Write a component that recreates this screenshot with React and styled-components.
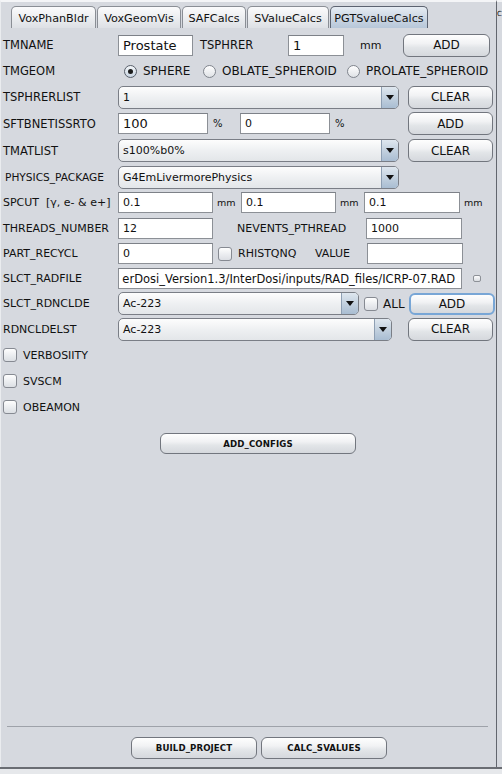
import React from "react";
import styled, { createGlobalStyle, css } from "styled-components";

const GlobalStyle = createGlobalStyle`
  html, body {
    margin: 0;
    padding: 0;
    background: #e4e6ea;
  }
  body {
    font-family: "DejaVu Sans", "Liberation Sans", sans-serif;
    color: #111;
  }
`;

const Screen = styled.div`
  width: 502px;
  height: 774px;
  display: flex;
  flex-direction: column;
  overflow: hidden;
  background: #e4e6ea;
`;

const Main = styled.div`
  display: flex;
  height: 767px;
  flex-shrink: 0;
`;

const Panel = styled.div`
  width: 497px;
  flex-shrink: 0;
  box-sizing: border-box;
  border-top: 2px solid #f4f5f7;
  border-left: 1px solid #eaecef;
  border-right: 1px solid #62666e;
  background: #d6d9df;
  display: flex;
  flex-direction: column;
`;

const SideStrip = styled.div`
  flex: 1;
  overflow: hidden;
  background: #d6d9df;
  border-top: 2px solid #f4f5f7;
  padding: 8px 0 0 0;
  font-size: 7px;
  white-space: nowrap;
`;

const BottomBar = styled.div`
  flex: 1;
  border-top: 2px solid #6a6d73;
  background: #e6e8eb;
`;

const TabBar = styled.div`
  display: flex;
  align-items: flex-end;
  gap: 1px;
  height: 26px;
  padding-left: 10px;
`;

const Tab = styled.div`
  box-sizing: border-box;
  width: ${(p) => p.$w}px;
  height: 22px;
  border: 1px solid #8a8e95;
  border-bottom: none;
  border-radius: 5px 5px 0 0;
  background: linear-gradient(#fbfbfc, #e9ebee 60%, #dde0e5);
  display: flex;
  align-items: center;
  justify-content: center;
  font-size: 11.2px;
  padding-top: 1px;
  ${(p) =>
    p.$active &&
    css`
      border-color: #5c6370;
      background: linear-gradient(#e6ecf3, #cdd8e4 50%, #b7c7d9);
    `}
`;

const Form = styled.div`
  display: flex;
  flex-direction: column;
  padding: 4px 0 0 2px;
`;

const Row = styled.div`
  display: flex;
  align-items: center;
  height: ${(p) => p.$h || 26}px;
`;

const Label = styled.span`
  flex-shrink: 0;
  box-sizing: border-box;
  width: ${(p) => (p.$w ? `${p.$w}px` : "auto")};
  padding-left: ${(p) => p.$pl || 0}px;
  font-size: ${(p) => p.$fs || 11.5}px;
  white-space: pre;
`;

const Field = styled.div`
  flex-shrink: 0;
  box-sizing: border-box;
  width: ${(p) => p.$w}px;
  height: 21px;
  background: #fff;
  border: 1px solid #8c9096;
  border-top-color: #7d8188;
  display: flex;
  align-items: center;
  padding: 0 4px;
  font-size: ${(p) => p.$fs || 11}px;
  white-space: nowrap;
  overflow: hidden;
  ${(p) =>
    p.$end &&
    css`
      justify-content: flex-end;
      padding-right: 6px;
    `}
`;

const Combo = styled.div`
  flex-shrink: 0;
  box-sizing: border-box;
  width: ${(p) => p.$w}px;
  height: 23px;
  display: flex;
  border: 1px solid #7a7e86;
  border-radius: 5px;
  overflow: hidden;
  background: linear-gradient(#fdfdfd, #eef0f2 50%, #e3e6e9);
`;

const ComboText = styled.span`
  flex: 1;
  display: flex;
  align-items: center;
  padding-left: 4px;
  font-size: 11px;
`;

const ComboArrow = styled.span`
  width: 16px;
  border-left: 1px solid #8e9fb3;
  background: linear-gradient(#dfe7ef, #c3d1df 50%, #a9bdd2);
  display: flex;
  align-items: center;
  justify-content: center;
`;

const Button = styled.button`
  flex-shrink: 0;
  box-sizing: border-box;
  width: ${(p) => p.$w}px;
  height: ${(p) => p.$h || 23}px;
  margin-left: ${(p) => p.$ml || 0}px;
  padding: 0;
  border: 1px solid #72767e;
  border-radius: 6px;
  background: linear-gradient(#fefefe, #f1f2f4 40%, #e2e5e8 60%, #d5d8dd);
  font-family: inherit;
  font-size: 12px;
  color: #111;
  ${(p) =>
    p.$focus &&
    css`
      border: 2px solid #78a6d6;
    `}
`;

const SmallButton = styled(Button)`
  font-size: 8.6px;
  font-weight: bold;
  letter-spacing: 0.1px;
`;

const Check = styled.span`
  flex-shrink: 0;
  box-sizing: border-box;
  width: 14px;
  height: 14px;
  margin-left: ${(p) => p.$ml || 0}px;
  border: 1px solid #868a92;
  border-radius: 3px;
  background: linear-gradient(#fefefe, #eceef1 50%, #dcdfe4);
`;

const TinyKnob = styled.span`
  flex-shrink: 0;
  box-sizing: border-box;
  width: 8px;
  height: 7px;
  margin-left: 11px;
  border: 1px solid #8d9197;
  border-radius: 2px;
  background: linear-gradient(#fdfdfd, #dadde2);
`;

const RadioGroup = styled.div`
  display: flex;
  align-items: center;
  padding-left: 6px;
`;

const RadioItem = styled.label`
  display: flex;
  align-items: center;
  gap: 6px;
  width: ${(p) => (p.$w ? `${p.$w}px` : "auto")};
  font-size: 12px;
  white-space: nowrap;
`;

const RadioDot = styled.span`
  box-sizing: border-box;
  width: 13px;
  height: 13px;
  border-radius: 50%;
  border: 1px solid #80858d;
  background: linear-gradient(#fefefe, #dfe2e6);
  display: flex;
  align-items: center;
  justify-content: center;
  ${(p) =>
    p.$on &&
    css`
      border-color: #59606b;
      background: linear-gradient(#f3f6f9, #c9d5e2);
      &::after {
        content: "";
        width: 5px;
        height: 5px;
        border-radius: 50%;
        background: #1c1c1c;
      }
    `}
`;

const ConfigRow = styled.div`
  display: flex;
  padding-left: 159px;
  margin-top: 13px;
`;

const Filler = styled.div`
  flex: 1;
`;

const Separator = styled.div`
  height: 1px;
  margin: 0 8px 0 6px;
  background: #9ea2a9;
`;

const Footer = styled.div`
  display: flex;
  gap: 4px;
  padding: 10px 0 8px 130px;
`;

const Arrow = () => (
  <svg width="8" height="5" viewBox="0 0 8 5">
    <polygon points="0,0 8,0 4,5" fill="#111" />
  </svg>
);

const Select = ({ w, value }) => (
  <Combo $w={w}>
    <ComboText>{value}</ComboText>
    <ComboArrow>
      <Arrow />
    </ComboArrow>
  </Combo>
);

const tabs = [
  { name: "VoxPhanBldr", w: 85 },
  { name: "VoxGeomVis", w: 84 },
  { name: "SAFCalcs", w: 64 },
  { name: "SValueCalcs", w: 82 },
  { name: "PGTSvalueCalcs", w: 98, active: true },
];

export default function App() {
  return (
    <>
      <GlobalStyle />
      <Screen>
        <Main>
          <Panel>
            <TabBar>
              {tabs.map((t) => (
                <Tab key={t.name} $w={t.w} $active={t.active}>
                  {t.name}
                </Tab>
              ))}
            </TabBar>

            <Form>
              <Row>
                <Label $w={115}>TMNAME</Label>
                <Field $w={75} $fs={13}>Prostate</Field>
                <Label $w={95} $pl={7}>TSPHRER</Label>
                <Field $w={56} $fs={13}>1</Field>
                <Label $w={59} $pl={16} $fs={11}>mm</Label>
                <Button $w={87}>ADD</Button>
              </Row>

              <Row>
                <Label $w={115}>TMGEOM</Label>
                <RadioGroup>
                  <RadioItem $w={79}>
                    <RadioDot $on />
                    SPHERE
                  </RadioItem>
                  <RadioItem $w={144}>
                    <RadioDot />
                    OBLATE_SPHEROID
                  </RadioItem>
                  <RadioItem>
                    <RadioDot />
                    PROLATE_SPHEROID
                  </RadioItem>
                </RadioGroup>
              </Row>

              <Row>
                <Label $w={115}>TSPHRERLIST</Label>
                <Select w={281} value="1" />
                <Button $w={85} $ml={9}>CLEAR</Button>
              </Row>

              <Row $h={27}>
                <Label $w={115}>SFTBNETISSRTO</Label>
                <Field $w={90} $fs={13}>100</Field>
                <Label $w={32} $pl={5} $fs={10}>%</Label>
                <Field $w={90}>0</Field>
                <Label $w={78} $pl={5} $fs={10}>%</Label>
                <Button $w={85}>ADD</Button>
              </Row>

              <Row $h={27}>
                <Label $w={115}>TMATLIST</Label>
                <Select w={281} value="s100%b0%" />
                <Button $w={85} $ml={9}>CLEAR</Button>
              </Row>

              <Row>
                <Label $w={115} $pl={2} $fs={10.6}>PHYSICS_PACKAGE</Label>
                <Select w={281} value="G4EmLivermorePhysics" />
              </Row>

              <Row $h={25}>
                <Label $w={115} $fs={11}>SPCUT  [γ, e- &amp; e+]</Label>
                <Field $w={95}>0.1</Field>
                <Label $w={28} $pl={4} $fs={9.5}>mm</Label>
                <Field $w={95}>0.1</Field>
                <Label $w={28} $pl={4} $fs={9.5}>mm</Label>
                <Field $w={96}>0.1</Field>
                <Label $pl={4} $fs={9.5}>mm</Label>
              </Row>

              <Row>
                <Label $w={115} $fs={11}>THREADS_NUMBER</Label>
                <Field $w={95}>12</Field>
                <Label $w={153} $pl={24} $fs={11}>NEVENTS_PTHREAD</Label>
                <Field $w={96}>1000</Field>
              </Row>

              <Row $h={25}>
                <Label $w={115} $fs={11}>PART_RECYCL</Label>
                <Field $w={95}>0</Field>
                <Check $ml={5} />
                <Label $w={77} $pl={6} $fs={11}>RHISTQNQ</Label>
                <Label $w={58} $pl={6} $fs={11}>VALUE</Label>
                <Field $w={96} />
              </Row>

              <Row $h={25}>
                <Label $w={115} $fs={11}>SLCT_RADFILE</Label>
                <Field $w={344} $fs={11.5} $end>
                  erDosi_Version1.3/InterDosi/inputs/RAD_files/ICRP-07.RAD
                </Field>
                <TinyKnob />
              </Row>

              <Row $h={25}>
                <Label $w={115} $fs={11}>SLCT_RDNCLDE</Label>
                <Select w={241} value="Ac-223" />
                <Check $ml={5} />
                <Label $w={31} $pl={5} $fs={12}>ALL</Label>
                <Button $w={86} $h={22} $focus>ADD</Button>
              </Row>

              <Row>
                <Label $w={115} $fs={11}>RDNCLDELST</Label>
                <Select w={274} value="Ac-223" />
                <Button $w={85} $ml={16}>CLEAR</Button>
              </Row>

              <Row>
                <Check />
                <Label $pl={6} $fs={11}>VERBOSIITY</Label>
              </Row>
              <Row>
                <Check />
                <Label $pl={6} $fs={11}>SVSCM</Label>
              </Row>
              <Row>
                <Check />
                <Label $pl={6} $fs={11}>OBEAMON</Label>
              </Row>
            </Form>

            <ConfigRow>
              <SmallButton $w={196} $h={21}>ADD_CONFIGS</SmallButton>
            </ConfigRow>

            <Filler />
            <Separator />
            <Footer>
              <SmallButton $w={126} $h={22}>BUILD_PROJECT</SmallButton>
              <SmallButton $w={126} $h={22}>CALC_SVALUES</SmallButton>
            </Footer>
          </Panel>
          <SideStrip>C</SideStrip>
        </Main>
        <BottomBar />
      </Screen>
    </>
  );
}
